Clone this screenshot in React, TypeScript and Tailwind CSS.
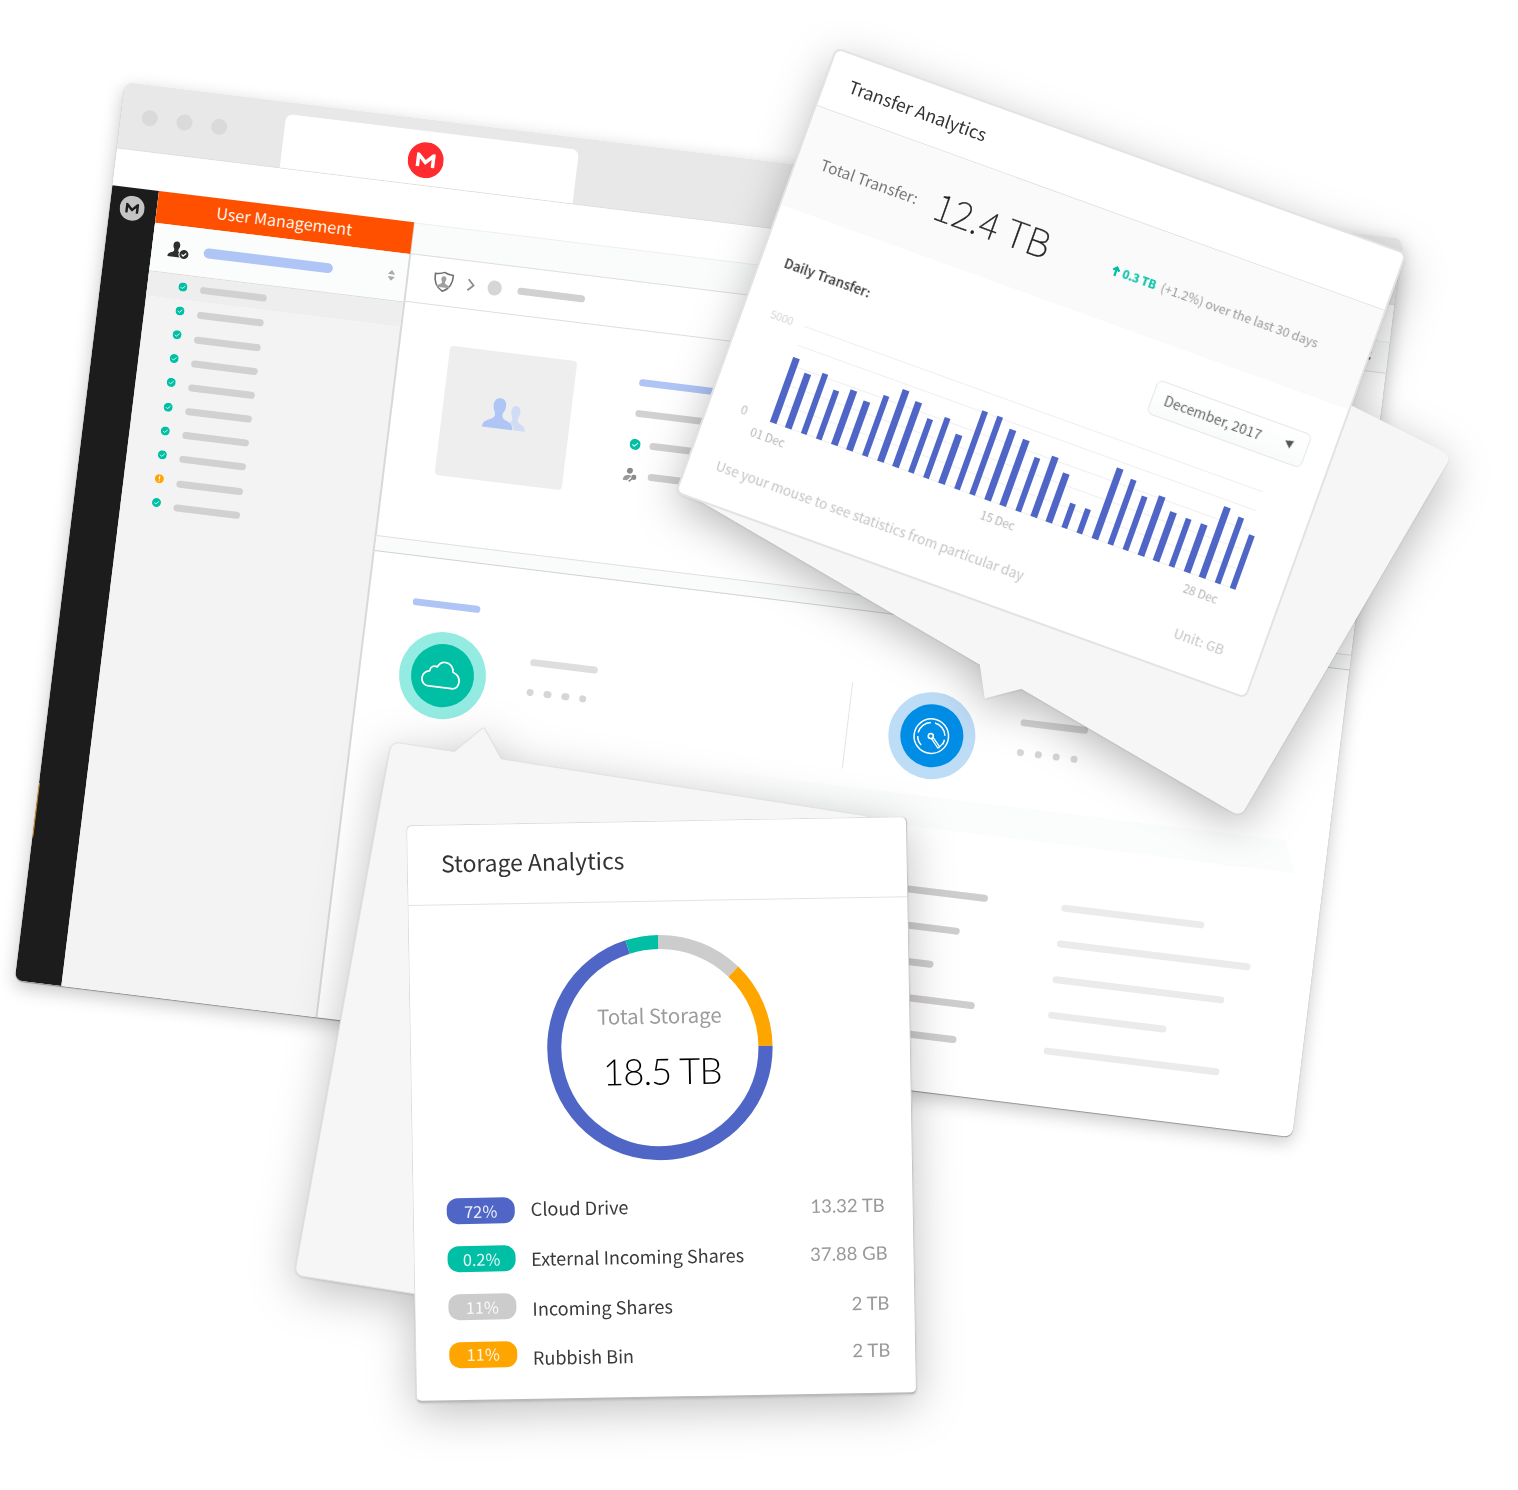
const MEGA =
  "M12 0C5.372 0 0 5.372 0 12s5.372 12 12 12 12-5.372 12-12S18.628 0 12 0zm6.23 16.244a.371.371 0 0 1-.373.372H16.29a.371.371 0 0 1-.372-.372v-4.828c0-.04-.046-.06-.08-.033l-3.32 3.32a.742.742 0 0 1-1.043 0l-3.32-3.32c-.027-.027-.08-.007-.08.033v4.828a.371.371 0 0 1-.372.372H6.136a.371.371 0 0 1-.372-.372V7.757c0-.205.167-.373.372-.373h1.08a.73.73 0 0 1 .525.22l4.27 4.27 4.27-4.27a.73.73 0 0 1 .525-.22h1.08c.205 0 .372.168.372.373z";

function Mega({ className }: { className: string }) {
  return (
    <svg viewBox="0 0 24 24" className={className} fill="currentColor">
      <path d={MEGA} />
    </svg>
  );
}

function Check({ className }: { className: string }) {
  return (
    <svg viewBox="0 0 12 12" className={className}>
      <circle cx="6" cy="6" r="6" fill="#00bfa5" />
      <path d="M3 6.3 5.2 8.1 9 4.2" fill="none" stroke="#d9f5f1" strokeWidth="1.200" />
    </svg>
  );
}

function Warn({ className }: { className: string }) {
  return (
    <svg viewBox="0 0 12 12" className={className}>
      <circle cx="6" cy="6" r="6" fill="#ffa500" />
      <path d="M6 2.5V7M6 8.3V9.8" stroke="#fff" strokeWidth="1.6" />
    </svg>
  );
}

const BUST =
  "M16 1c4.200 0 6.600 3 6.400 7.500-.1 2.200-.6 3.600-1.400 5-.7 1.200-1.100 2-1.100 3.500 0 2.400 1.300 3.500 4.500 4.800 4.600 1.900 7.100 3 7.400 8.200H.2c.3-5.200 2.800-6.300 7.400-8.200 3.200-1.300 4.500-2.400 4.500-4.800 0-1.500-.4-2.300-1.100-3.500-.8-1.400-1.300-2.800-1.400-5C9.400 4 11.800 1 16 1z";

const listRows = [
  { ok: true, dy: "mt-[2px]" },
  { ok: true, dy: "mt-[3px]" },
  { ok: true, dy: "mt-[5.500px]" },
  { ok: true, dy: "mt-[6px]" },
  { ok: true, dy: "mt-[5px]" },
  { ok: true, dy: "mt-[5px]" },
  { ok: true, dy: "mt-[4px]" },
  { ok: true, dy: "mt-[4.500px]" },
  { ok: false, dy: "mt-[7px]" },
  { ok: true, dy: "mt-[6.500px]" },
];

function Dots() {
  return (
    <div className="flex gap-[10.600px]">
      {[0, 1, 2, 3].map((i) => (
        <span key={i} className="size-[7.300px] rounded-full bg-[#d6d6d6]" />
      ))}
    </div>
  );
}

function BrowserWindow() {
  return (
    <div className="absolute left-[125px] top-[82px] h-[904.500px] w-[1287px] origin-top-left rotate-[7deg] rounded-[8px] bg-white shadow-[0_6px_18px_rgba(0,0,0,0.22),0_1px_1px_rgba(0,0,0,0.35)]">
      <div className="flex h-full flex-col overflow-hidden rounded-[8px]">
        <div className="flex h-[66.500px] shrink-0 items-end border-b border-[#dedede] bg-[#e8e8e8]">
          <div className="mb-[24.500px] ml-[20.500px] flex w-[143.500px] gap-[19px]">
            <span className="size-[16px] rounded-full bg-[#dadada]" />
            <span className="size-[16px] rounded-full bg-[#dadada]" />
            <span className="size-[16px] rounded-full bg-[#dadada]" />
          </div>
          <div className="flex h-[54px] w-[295px] items-center justify-center rounded-t-[7px] bg-white pr-[7px] pt-[5px]">
            <Mega className="size-[36px] text-[#ff2b2e]" />
          </div>
        </div>
        <div className="h-[37px] shrink-0 bg-white" />
        <div className="flex min-h-0 flex-1">
          <div className="flex w-[46.500px] shrink-0 flex-col bg-[#1c1c1c]">
            <Mega className="ml-[10px] mt-[8px] size-[25px] text-[#c4c4c4]" />
            <span className="mt-[569px] h-[54px] w-[1px] bg-[#d98a1c]" />
          </div>
          <div className="flex w-[258px] shrink-0 flex-col border-r-2 border-[#d9d9d9] bg-[#f3f3f3]">
            <div className="-mr-[1.500px] flex h-[32.500px] items-center justify-center bg-[#ff5000] pb-[4px] text-[16.150px] leading-none text-white/95">
              User Management
            </div>
            <div className="flex h-[48.500px] items-center border-b border-[#dcdcdc] bg-[#fbfcfc] pl-[16px]">
              <svg viewBox="0 0 44 36" className="h-[18px] w-[22px]">
                <g transform="translate(0,1)" fill="#2e2e2e">
                  <path d={BUST} transform="scale(1.050 1.070)" />
                </g>
                <circle cx="33" cy="26" r="11" fill="#fbfcfc" />
                <circle cx="33" cy="26" r="9" fill="#2e2e2e" />
                <path d="M28.500 26.500l3.200 3 5.600-6" fill="none" stroke="#fff" strokeWidth="2.400" />
              </svg>
              <span className="ml-[14px] h-[10.500px] w-[130.500px] rounded-full bg-[#aec5f6]" />
              <svg viewBox="0 0 8 12" className="ml-[55px] h-[11px] w-[8px]" fill="#a9a9a9">
                <path d="M4 0 8 4.800H0zM0 7.200h8L4 12z" />
              </svg>
            </div>
            <div className="flex flex-col bg-[linear-gradient(#eeeeee_24px,transparent_24px)]">
              {listRows.map((r, i) => (
                <div key={i} className="flex h-[24.120px] items-center pl-[31.500px]">
                  {r.ok ? <Check className="size-[9px]" /> : <Warn className="size-[9px]" />}
                  <span className={"ml-[12.500px] h-[7px] w-[67.500px] rounded-full bg-[#d2d0d1] " + r.dy} />
                </div>
              ))}
            </div>
          </div>
          <div className="flex min-w-0 flex-1 flex-col">
            <div className="flex h-[32.500px] shrink-0 items-center justify-end border-y border-b-[#dedede] border-t-[#efefef] bg-[#fafbfb] pr-[17px]">
              <span className="flex flex-col gap-[3px]">
                <i className="size-[3px] rounded-full bg-[#666]" />
                <i className="size-[3px] rounded-full bg-[#666]" />
              </span>
            </div>
            <div className="flex h-[47.500px] shrink-0 items-center border-b border-[#dedede] pl-[25px]">
              <svg viewBox="0 0 42 42" className="size-[21px]">
                <path d="M21 2c5 3 11 4 18 4 1 16-3 27-18 34C6 33 2 22 3 6c7 0 13-1 18-4z" fill="none" stroke="#707070" strokeWidth="3.200" />
                <path d={BUST} fill="#a0a0a0" transform="translate(8.500 9) scale(.78 .78)" />
              </svg>
              <svg viewBox="0 0 8 14" className="ml-[13px] h-[13px] w-[8px]">
                <path d="M1 1l6 6-6 6" fill="none" stroke="#8d8d8d" strokeWidth="2" />
              </svg>
              <span className="ml-[13px] size-[14.500px] rounded-full bg-[#d6d6d6]" />
              <span className="ml-[16px] h-[7px] w-[67.500px] rounded-full bg-[#d2d0d1]" />
            </div>
            <div className="flex h-[235px] shrink-0 pl-[50px] pt-[38px]">
              <div className="flex h-[130px] w-[128px] items-center justify-center rounded-[4px] bg-[#eeeeee]">
                <svg viewBox="0 0 88 66" className="mb-[7px] mr-[1px] h-[33px] w-[44px]">
                  <path d={BUST} fill="#d0dcf5" transform="translate(42 12) scale(1.400 1.700)" />
                  <path d={BUST} fill="#eeeeee" transform="translate(-3 -2) scale(2.120 2.250)" />
                  <path d={BUST} fill="#aec5f6" transform="translate(0 0) scale(1.940 2.100)" />
                </svg>
              </div>
              <div className="-mt-[2px] ml-[64px] flex flex-col">
                <div className="flex h-[31.200px] items-center">
                  <span className="h-[7px] w-[140px] rounded-full bg-[#aec5f6]" />
                </div>
                <div className="flex h-[31.200px] items-center">
                  <span className="h-[7px] w-[120px] rounded-full bg-[#d2d0d1]" />
                </div>
                <div className="-ml-[2px] flex h-[31.200px] items-center">
                  <Check className="size-[11px]" />
                  <span className="ml-[9.500px] h-[7px] w-[100px] rounded-full bg-[#d2d0d1]" />
                </div>
                <div className="-ml-[4.500px] flex h-[31.200px] items-center">
                  <svg viewBox="0 0 30 32" className="h-[15px] w-[14px]">
                    <circle cx="14" cy="7" r="6.500" fill="#8a8a8a" />
                    <path d="M1 26c1-8 6-9 13-10l5 2-9 10H1z" fill="#9a9a9a" />
                    <circle cx="24" cy="20" r="5.500" fill="#8a8a8a" />
                    <path d="M22 22l-8 8" stroke="#8a8a8a" strokeWidth="3.500" />
                  </svg>
                  <span className="ml-[10.500px] h-[7px] w-[100px] rounded-full bg-[#d2d0d1]" />
                </div>
              </div>
            </div>
            <div className="h-[16.500px] shrink-0 border-y border-b-[#d2d2d2] border-t-[#e0e0e0] bg-[#fafbfb]" />
            <span className="ml-[44px] mt-[42px] h-[7px] w-[68.500px] shrink-0 rounded-full bg-[#aec5f6]" />
            <div className="mt-[23px] flex h-[87px] shrink-0">
              <div className="flex w-[491.500px] border-r border-[#e4e4e4] pl-[39.500px]">
                <div className="flex size-[87px] items-center justify-center rounded-full bg-[#94ebe1]">
                  <div className="flex size-[63.500px] items-center justify-center rounded-full bg-[#00bfa5]">
                    <svg viewBox="0 0 76 54" className="mb-[1px] mr-[3px] h-[28px] w-[40px]" fill="none" stroke="#fff" strokeWidth="3.400" strokeLinejoin="round">
                      <path d="M17 51C8 51 2 45 2 36.500 2 28.500 8 22.500 15 22 16 13 22 10 29 12.500 32 5.500 37 2 43 2 53 2 60 10 60 19 68 21 74 28 74 36 74 45 69 51 61 51z" />
                    </svg>
                  </div>
                </div>
                <div className="ml-[41.500px] mt-[16px] flex flex-col gap-[22.500px]">
                  <span className="h-[7px] w-[68px] rounded-full bg-[#dedede]" />
                  <Dots />
                </div>
              </div>
              <div className="flex pl-[40.500px]">
                <div className="flex size-[87px] items-center justify-center rounded-full bg-[#bddcf6]">
                  <div className="flex size-[63px] items-center justify-center rounded-full bg-[#008de6]">
                    <svg viewBox="0 0 76 76" className="size-[38px]" fill="none" stroke="#fff">
                      <circle cx="38" cy="38" r="34.500" strokeWidth="3" />
                      <path d="M20 58A27 27 0 0 1 11 41M11 34A27 27 0 0 1 34 11M42 11A27 27 0 0 1 65 34M65 42A27 27 0 0 1 62 52" strokeWidth="3" />
                      <circle cx="37" cy="38" r="5" strokeWidth="3.200" />
                      <path d="M39 43 54 60l3-3-16-18" strokeWidth="2.600" />
                      <path d="M55 60l9-12" strokeWidth="2.400" />
                    </svg>
                  </div>
                </div>
                <div className="ml-[43.500px] mt-[16px] flex flex-col gap-[23px]">
                  <span className="h-[7px] w-[68px] rounded-full bg-[#d6d6d6]" />
                  <Dots />
                </div>
              </div>
            </div>
            <div className="ml-[300px] mt-[17px] h-[32px] w-[654px] shrink-0 bg-linear-to-r from-white via-[#fbfcfc] via-30% to-[#fbfcfc] [clip-path:polygon(0_0,97.700%_0,100%_100%,0_100%)]" />
            <div className="ml-[515px] mt-[45px] flex">
              <div className="flex w-[210px] flex-col">
                <div className="flex h-[35.900px] items-center"><span className="h-[7px] w-[136px] rounded-full bg-[#cfcdce]" /></div>
                <div className="flex h-[35.900px] items-center"><span className="h-[7px] w-[112px] rounded-full bg-[#cfcdce]" /></div>
                <div className="flex h-[35.900px] items-center"><span className="h-[7px] w-[90px] rounded-full bg-[#cfcdce]" /></div>
                <div className="flex h-[35.900px] items-center"><span className="h-[7px] w-[136px] rounded-full bg-[#cfcdce]" /></div>
                <div className="flex h-[35.900px] items-center"><span className="h-[7px] w-[122px] rounded-full bg-[#cfcdce]" /></div>
              </div>
              <div className="flex flex-col">
                <div className="flex h-[35.900px] items-center"><span className="h-[7px] w-[144px] rounded-full bg-[#ebebeb]" /></div>
                <div className="flex h-[35.900px] items-center"><span className="h-[7px] w-[195px] rounded-full bg-[#ebebeb]" /></div>
                <div className="flex h-[35.900px] items-center"><span className="h-[7px] w-[173px] rounded-full bg-[#ebebeb]" /></div>
                <div className="flex h-[35.900px] items-center"><span className="h-[7px] w-[119px] rounded-full bg-[#ebebeb]" /></div>
                <div className="flex h-[35.900px] items-center"><span className="h-[7px] w-[177px] rounded-full bg-[#ebebeb]" /></div>
              </div>
            </div>
          </div>
        </div>
      </div>
    </div>
  );
}

const bars = [
  69.5, 57.7, 64.3, 52.4, 57.6, 52.4, 64, 76, 69, 57.3, 63.8, 52.4, 83.4, 83.4, 75.4, 70.3, 57.2, 63.8, 52, 25.6, 26,
  75.3, 68.7, 57, 63.5, 51.7, 51.5, 51.4, 75, 70, 57,
];

function TransferCard() {
  return (
    <div className="absolute left-[836px] top-[47px] flex h-[473.500px] w-[607px] origin-top-left rotate-[19.850deg] flex-col rounded-[7px] border-2 border-[#e3e3e3] bg-white">
      <div className="flex h-[60px] shrink-0 items-center border-b border-[#e2e2e2] pl-[24px] text-[17.600px] leading-none text-[#333]">
        Transfer Analytics
      </div>
      <div className="flex h-[105px] shrink-0 items-start bg-[#fafafa] pl-[24px] leading-none">
        <span className="mt-[45.300px] w-[121.300px] text-[15.400px] text-[#777]">Total Transfer:</span>
        <span className="mt-[31.800px] w-[188px] whitespace-nowrap text-[37.700px] font-thin text-[#222] [-webkit-text-stroke:0.300px_#222]">12.4 TB</span>
        <svg viewBox="0 0 16 22" className="mt-[48px] h-[11px] w-[9px]" fill="none" stroke="#00bfa5" strokeWidth="4.600">
          <path d="M8 22V4M1.500 10.500 8 4l6.500 6.500" />
        </svg>
        <span className="ml-[2.500px] mt-[48px] w-[40.800px] text-[11.500px] font-bold text-[#00bfa5] [-webkit-text-stroke:0.200px_#00bfa5]">0.3 TB</span>
        <span className="mt-[46.800px] text-[12.600px] text-[#999]">(+1.2%) over the last 30 days</span>
      </div>
      <div className="flex h-[106px] shrink-0 items-start justify-between pl-[23px] pr-[25.500px] leading-none">
        <span className="mt-[45.600px] text-[13.200px] font-medium text-[#333]">Daily Transfer:</span>
        <span className="mt-[36px] flex h-[36px] w-[163.500px] items-center justify-between rounded-[6px] border border-[#e6e6e6] bg-linear-to-b from-white to-[#f9fbfb] pb-[1px] pl-[12px] pr-[12.500px] text-[13.850px] text-[#666]">
          December, 2017
          <svg viewBox="0 0 9 8" className="mb-[1px] h-[8px] w-[9px] -rotate-[15deg]" fill="#555">
            <path d="M0 0h9L4.500 8z" />
          </svg>
        </span>
      </div>
      <div className="flex h-[102px] shrink-0 text-[11px] leading-none text-[#c4c4c4]">
        <div className="flex w-[63px] flex-col items-end">
          <span className="-mt-[6px] mr-[12px] font-light">5000</span>
          <span className="mr-[24.500px] mt-[88px] text-[12px] text-[#bbb]">0</span>
        </div>
        <div className="flex h-[102px] w-[496px] items-end gap-[9.800px] bg-[repeating-linear-gradient(to_bottom,#efefef_0,#efefef_1px,transparent_1px,transparent_20.300px)] bg-[length:488px_102px] bg-no-repeat">
          {bars.map((h, i) => (
            <span key={i} className="w-[6.500px] shrink-0 bg-[#4f66c6]" style={{ height: h }} />
          ))}
        </div>
      </div>
      <div className="mt-[9px] flex shrink-0 pl-[48.200px] text-[11.700px] leading-none text-[#b3b3b3]">
        <span className="w-[244.500px]">01 Dec</span>
        <span className="w-[215.700px]">15 Dec</span>
        <span>28 Dec</span>
      </div>
      <div className="mt-[31.500px] flex shrink-0 justify-between pl-[27.500px] pr-[35.500px] text-[13.650px] leading-none text-[#c4c4c4]">
        <span>Use your mouse to see statistics from particular day</span>
        <span className="pt-[2px]">Unit: GB</span>
      </div>
    </div>
  );
}

function TransferBubble() {
  return (
    <div className="absolute left-[895.400px] top-[130.400px] h-[419px] w-[645px] origin-top-left rotate-[30.300deg]">
      <div className="h-full w-full bg-[#f6f6f6] [clip-path:path('M0_42L634_1Q645_0_645_10L645_408Q645_419_634_419L0_419Z')]" />
      <svg viewBox="0 0 48 28" className="absolute left-[342.800px] top-[418px] h-[28px] w-[48px]" fill="#f6f6f6">
        <path d="M0 0H48V1L21.200 27.500 0 1z" />
      </svg>
    </div>
  );
}

function StorageBubble() {
  return (
    <div className="absolute left-[391px] top-[741px] h-[543px] w-[488px] origin-top-left rotate-[8.900deg] -skew-x-[1.400deg]">
      <div className="h-full w-full rounded-[9px] border border-[#e2e2e2] bg-[#f6f6f6]" />
      <svg viewBox="0 0 48 31" className="absolute -top-[28px] left-[64px] h-[31px] w-[48px]" fill="#f6f6f6">
        <path d="M0 29 23.500 1.500Q25 0 26.500 2L48 29V31H0z" />
        <path d="M0 29 23.500 1.500Q25 0 26.500 2L48 29" fill="none" stroke="#e2e2e2" />
      </svg>
    </div>
  );
}

function arc(a: number, b: number) {
  const r = 105.6;
  const p = (d: number) => {
    const t = ((d - 90) * Math.PI) / 180;
    return `${113 + r * Math.cos(t)} ${113 + r * Math.sin(t)}`;
  };
  return `M${p(a)}A${r} ${r} 0 ${b - a > 180 ? 1 : 0} 1 ${p(b)}`;
}

const rows = [
  { pct: "72%", name: "Cloud Drive", value: "13.32 TB", color: "bg-[#4f66c6]", pr: "pr-[28px]", n: "ml-[16px] mt-[-3px]", v: "mt-[2px]" },
  { pct: "0.2%", name: "External Incoming Shares", value: "37.88 GB", color: "bg-[#00bfa5]", pr: "pr-[26px]", n: "ml-[15.500px] mt-0", v: "mt-[3px]" },
  { pct: "11%", name: "Incoming Shares", value: "2 TB", color: "bg-[#cccccc]", pr: "pr-[25px]", n: "ml-[16px] mt-[5px]", v: "mt-[8px]" },
  { pct: "11%", name: "Rubbish Bin", value: "2 TB", color: "bg-[#ffa500]", pr: "pr-[25px]", n: "ml-[15.500px] mt-[6px]", v: "mt-[5px]" },
];

function StorageCard() {
  return (
    <div className="absolute left-[405.500px] top-[825px] flex h-[578px] w-[501px] origin-top-left -rotate-[1deg] flex-col rounded-[6px] border border-[#dcdcdc] border-b-2 border-r-[#c4c4c4] border-b-[#b9b9b9] bg-white">
      <div className="flex h-[80px] shrink-0 items-center border-b border-[#e2e2e2] pb-[3.500px] pl-[33.500px] text-[22.900px] leading-none text-[#333]">
        Storage Analytics
      </div>
      <div className="relative ml-[135.500px] mt-[32.800px] flex size-[226px] shrink-0 flex-col items-center">
        <svg viewBox="0 0 226 226" className="absolute inset-0 size-full" fill="none" strokeWidth="14.200">
          <path d={arc(0, 45)} stroke="#cccccc" />
          <path d={arc(45, 90)} stroke="#ffa500" />
          <path d={arc(90, 343.2)} stroke="#4f66c6" />
          <path d={arc(343.2, 360)} stroke="#00bfa5" />
        </svg>
        <span className="ml-[1px] mt-[69.800px] text-[20.400px] leading-none text-[#9c9c9c]">Total Storage</span>
        <span className="ml-[5px] mt-[27.500px] whitespace-nowrap font-['Lato',sans-serif] text-[36.300px] font-light leading-none tracking-[-0.800px] text-black">
          18.5 TB
        </span>
      </div>
      <div className="mt-[23.200px] flex flex-col leading-none">
        {rows.map((r) => (
          <div key={r.name} className={"flex h-[47.900px] items-center pl-[33px] " + r.pr}>
            <span className={"flex h-[26px] w-[68px] items-center justify-center rounded-[11px] text-[16.300px] text-white/90 " + r.color}>{r.pct}</span>
            <span className={"text-[18.100px] text-[#3a3a3a] " + r.n}>{r.name}</span>
            <span className={"ml-auto font-['Lato',sans-serif] text-[18.500px] text-[#999] " + r.v}>{r.value}</span>
          </div>
        ))}
      </div>
    </div>
  );
}

export default function App() {
  return (
    <div className="relative h-[1490px] w-[1518px] overflow-hidden bg-white font-['Noto_Sans_CJK_SC',sans-serif]">
      <BrowserWindow />
      <div className="absolute inset-0 [filter:drop-shadow(0_1px_1px_rgba(0,0,0,0.08))_drop-shadow(0_12px_22px_rgba(0,0,0,0.28))]">
        <TransferBubble />
        <TransferCard />
      </div>
      <div className="absolute inset-0 [filter:drop-shadow(0_1px_1px_rgba(0,0,0,0.12))_drop-shadow(0_10px_23px_rgba(0,0,0,0.25))]">
        <StorageBubble />
        <StorageCard />
      </div>
    </div>
  );
}
